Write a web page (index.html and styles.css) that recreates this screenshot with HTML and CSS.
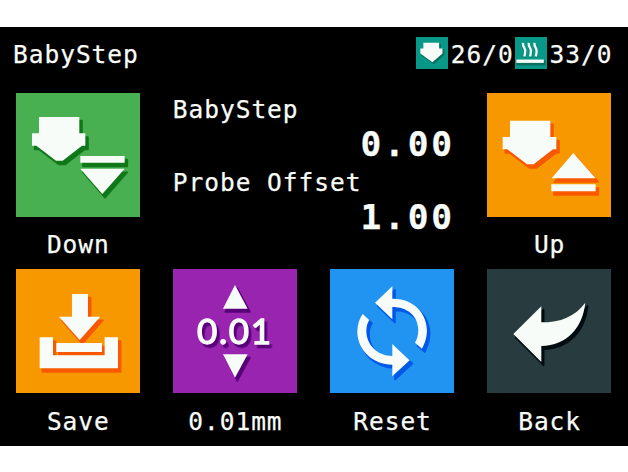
FILE: index.html
```html
<!DOCTYPE html>
<html lang="en">
<head>
<meta charset="utf-8">
<title>BabyStep</title>
<link rel="stylesheet" href="styles.css">
</head>
<body>
<main class="screen">
  <header class="bar">
    <h1 class="title">BabyStep</h1>
    <div class="temps">
      <svg class="chip" viewBox="48 52 94 95">
        <path class="shade" transform="translate(4 4)" d="M71 70H116V86H126V101L97 126L61 101V86H71Z"/>
        <path class="shape" d="M70 69H117V86H127V101L97 127L61 101V86H70Z"/>
      </svg>
      <span class="temp">26/0</span>
      <svg class="chip" viewBox="347 52 94 95">
        <g class="steam shadow" transform="translate(3 3)"><path d="M371 70q-5 8 1 16t1 24M388 70q-5 8 1 16t1 24M405 70q-5 8 1 16t1 24"/></g>
        <path class="shade" d="M354 124H436V134H354Z"/>
        <g class="steam"><path d="M371 69q-1 8 4 16t0 25M388 69q-1 8 4 16t0 25M405 69q-1 8 4 16t0 25"/></g>
        <path class="shape" d="M351 119H433V129H351Z"/>
      </svg>
      <span class="temp">33/0</span>
    </div>
  </header>
  <div class="grid">
    <button class="cell">
      <svg class="tile green" viewBox="47 22 373 373">
        <path class="shade" transform="translate(8 11)" d="M116 94H237V143H255V180H245L187 225H167L108 180H95V143H116ZM240 211H373V231H240ZM240 249H373L306 325Z"/>
        <path class="shape" d="M116 94H237V143H255V180H245L187 225H167L108 180H95V143H116ZM240 211H373V231H240ZM240 249H373L306 325Z"/>
      </svg>
      <span class="label">Down</span>
    </button>
    <section class="readout">
      <span class="name">BabyStep</span>
      <span class="value">0.00</span>
      <span class="name">Probe Offset</span>
      <span class="value">1.00</span>
    </section>
    <button class="cell">
      <svg class="tile orange" viewBox="50 22 373 373">
        <path class="shade" transform="translate(8 11)" d="M119 105H240V154H258V191H248L190 236H170L111 191H97V154H119ZM309 202L376 278H244ZM243 296H376V317H243Z"/>
        <path class="shape" d="M119 105H240V154H258V191H248L190 236H170L111 191H97V154H119ZM309 202L376 278H244ZM243 296H376V317H243Z"/>
      </svg>
      <span class="label">Up</span>
    </button>
    <button class="cell">
      <svg class="tile orange" viewBox="47 27 373 373">
        <path class="shade" transform="translate(8 11)" d="M215 102H263V170H300L238 240L176 170H215ZM118 232H158V286H313V232H353V325H118ZM168 249H304V273H168Z"/>
        <path class="shape" d="M215 102H263V170H300L238 240L176 170H215ZM118 232H158V286H313V232H353V325H118ZM168 249H305V276H168Z"/>
      </svg>
      <span class="label">Save</span>
    </button>
    <button class="cell">
      <svg class="tile purple" viewBox="38 27 373 373">
        <path class="shade" transform="translate(7 10)" d="M224 75L262 146H188ZM188 283H262L224 353Z"/>
        <path class="shape" d="M224 75L262 146H188ZM188 283H262L224 353Z"/>
        <text class="step" x="110" y="253" textLength="222">0.01</text>
      </svg>
      <span class="label">0.01mm</span>
    </button>
    <button class="cell">
      <svg class="tile blue" viewBox="44 27 373 373">
        <path class="shade" transform="translate(8 10)" d="M231 79V116C298 115 335 163 335 213Q334 241 320 266L299 248Q309 231 309 209C307 166 275 141 231 141V178L179 128ZM142 162L162 180Q153 193 153 214C154 258 189 288 231 288V252L283 301L231 349V314C174 314 127 272 126 216Q126 185 142 162Z"/>
        <path class="shape" d="M231 79V116C298 115 335 163 335 213Q334 241 320 266L299 248Q309 231 309 209C307 166 275 141 231 141V178L179 128ZM142 162L162 180Q153 193 153 214C154 258 189 288 231 288V252L283 301L231 349V314C174 314 127 272 126 216Q126 185 142 162Z"/>
      </svg>
      <span class="label">Reset</span>
    </button>
    <button class="cell">
      <svg class="tile slate" viewBox="50 27 373 373">
        <path class="shade" transform="translate(7 10)" d="M213 139V187C271 187 314 170 345 128C337 203 290 256 213 258V306L129 222Z"/>
        <path class="shape" d="M213 139V187C271 187 314 170 345 128C337 203 290 256 213 258V306L129 222Z"/>
      </svg>
      <span class="label">Back</span>
    </button>
  </div>
</main>
</body>
</html>
```

FILE: styles.css
```css
* { box-sizing: border-box; }

body {
  margin: 0;
  padding: 27px 0 26px;
  height: 472px;
  background: #fff;
}

.screen {
  height: 419px;
  background: #000;
  color: #f8fcf8;
  font: 24.5px/30px "DejaVu Sans Mono", monospace;
  letter-spacing: 0.97px;
  -webkit-text-stroke: 0.25px #f8fcf8;
  overflow: hidden;
}

.bar {
  display: flex;
  justify-content: space-between;
  height: 65.5px;
  padding: 10px 14px 0 13px;
}

.title { margin: 0; padding-top: 3px; font: inherit; }

.temps { display: flex; }

.temp { width: 67.4px; padding: 3px 0 0 3px; white-space: nowrap; }

.chip { width: 31.5px; height: 32px; background: #089888; --shade: #087060; }

.grid {
  display: grid;
  grid-template-columns: repeat(4, 124.3px);
  grid-auto-rows: 176.7px;
  column-gap: 32.8px;
  padding-left: 15.7px;
}

.cell {
  display: flex;
  flex-direction: column;
  align-items: center;
  padding: 0;
  border: 0;
  background: none;
  color: inherit;
  font: inherit;
  letter-spacing: inherit;
}

.tile { flex: none; width: 124.3px; height: 124.3px; }

.label { margin-top: 13.5px; padding-left: 1px; white-space: nowrap; }

.green { background: #48b050; --shade: #107818; }
.orange { background: #f89800; --shade: #f85800; }
.purple { background: #9824b0; --shade: #580078; }
.blue { background: #2094f0; --shade: #0058e8; }
.slate { background: #283c40; --shade: #000c10; }

.shape { fill: #f8fcf8; }

.shade {
  fill: var(--shade);
  stroke: var(--shade);
  stroke-width: 5;
  stroke-linejoin: round;
}

.steam { fill: none; stroke: #f8fcf8; stroke-width: 7; }
.steam.shadow { stroke: var(--shade); }

.step {
  fill: #f8fcf8;
  stroke: #f8fcf8;
  stroke-width: 4;
  -webkit-text-stroke: 4px #f8fcf8;
  font: 105px Lato, sans-serif;
  letter-spacing: 0;
  filter: drop-shadow(8px 10px 0 var(--shade));
}

.readout {
  grid-column: span 2;
  display: grid;
  grid-template-rows: 35px 38px 35px 38px;
  align-content: start;
  width: 282px;
  padding-top: 2px;
}

.value {
  justify-self: end;
  font-size: 34.5px;
  line-height: 28px;
  font-weight: bold;
  letter-spacing: 2.8px;
}
```
